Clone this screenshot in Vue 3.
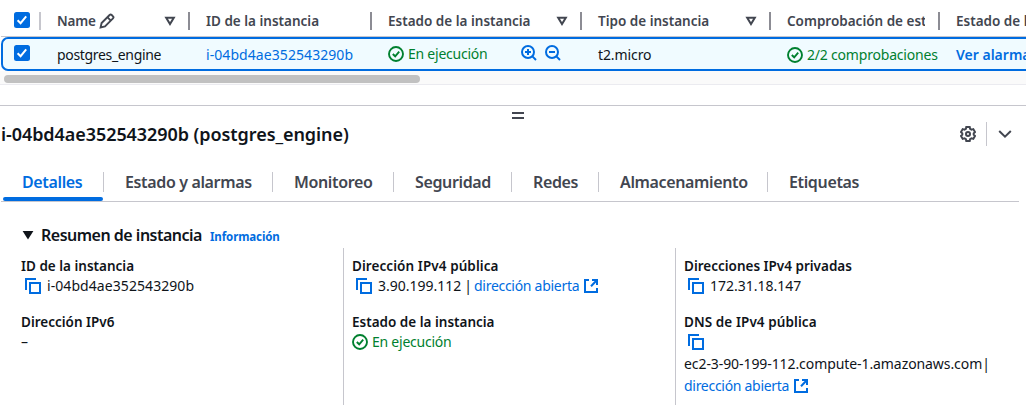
<script setup>
import { h } from 'vue'

const stroke = (cls, paths) => () =>
  h('svg', { class: ['ico', cls], viewBox: '0 0 16 16', width: 16, height: 16 }, paths.map(d => h('path', { d })))

const StatusOk = stroke('green', ['M8 1a7 7 0 1 1 0 14a7 7 0 0 1 0-14z', 'M4.8 8l2.4 2.3l4-4.6'])
const CopyIcon = stroke('blue', ['M1 12V1h10', 'M5 5h10v10H5z'])
const External = stroke('blue', ['M6 2H2v12h12v-4', 'M9 2H14v5', 'M14 2L8 8.2'])
const ZoomIn = stroke('blue', ['M7 1a6 6 0 1 1 0 12a6 6 0 0 1 0-12z', 'M11.4 11.4L15 15', 'M4 7h6', 'M7 4v6'])
const ZoomOut = stroke('blue', ['M7 1a6 6 0 1 1 0 12a6 6 0 0 1 0-12z', 'M11.4 11.4L15 15', 'M4 7h6'])
const Filter = stroke('grey', ['M4.2 4.8h7.6L8 11z'])
const Checkbox = () =>
  h('svg', { class: 'check', viewBox: '0 0 16 16', width: 16, height: 16 }, [
    h('rect', { width: 16, height: 16, rx: 2.5 }),
    h('path', { d: 'M3.6 8.2l3 3l5.6-6.8' }),
  ])

const tabs = ['Detalles', 'Estado y alarmas', 'Monitoreo', 'Seguridad', 'Redes', 'Almacenamiento', 'Etiquetas']
</script>

<template>
  <div class="console">
    <div class="grid head">
      <div class="cell pick"><Checkbox /></div>
      <div class="cell name"><span class="label">Name</span>
        <svg class="ico grey pencil" viewBox="0 0 16 16" width="16" height="16"><path d="M1.6 14.4l1-4.4L10.6 2a1.5 1.5 0 0 1 2.1 0l1.3 1.3a1.5 1.5 0 0 1 0 2.1L6 13.4z" /><path d="M8.4 4.2l3.4 3.4" /></svg>
        <Filter class="end" />
      </div>
      <div class="cell"><span>ID de la instancia</span></div>
      <div class="cell"><span>Estado de la instancia</span><Filter class="end" /></div>
      <div class="cell"><span>Tipo de instancia</span><Filter class="end" /></div>
      <div class="cell"><span class="clip">Comprobación de estado</span></div>
      <div class="cell"><span>Estado de la alarma</span></div>
    </div>
    <div class="grid row">
      <div class="cell pick"><Checkbox /></div>
      <div class="cell"><span class="engine">postgres_engine</span></div>
      <div class="cell"><a class="rid">i-04bd4ae352543290b</a></div>
      <div class="cell state"><StatusOk /><span class="ok">En ejecución</span><ZoomIn class="zin" /><ZoomOut class="zout" /></div>
      <div class="cell"><span class="type">t2.micro</span></div>
      <div class="cell state2"><StatusOk /><span class="ok checks">2/2 comprobaciones</span></div>
      <div class="cell"><a class="alarm">Ver alarmas</a></div>
    </div>
    <div class="track"><div class="thumb"></div></div>

    <section class="panel">
      <div class="handle"></div>
      <header class="title">
        <h1>i-04bd4ae352543290b (postgres_engine)</h1>
        <svg class="ico grey gear" viewBox="0 0 16 16" width="16" height="16"><path d="M6.3 1h3.4l.4 1.8l1.4.8l1.8-.5L15 6l-1.3 1.3v1.4L15 10l-1.7 2.9l-1.8-.5l-1.4.8l-.4 1.8H6.3l-.4-1.8l-1.4-.8l-1.8.5L1 10l1.3-1.3V7.3L1 6l1.7-2.9l1.8.5l1.4-.8z" /><circle cx="8" cy="8" r="2" /></svg>
        <i class="bar"></i>
        <svg class="ico grey" viewBox="0 0 16 16" width="16" height="16"><path d="M2.2 5L8 10.6L13.8 5" /></svg>
      </header>
      <nav class="tabs">
        <div v-for="(t, i) in tabs" :key="t" class="tab" :class="{ active: i === 0 }"><span>{{ t }}</span></div>
      </nav>
      <div class="summary">
        <svg class="caret" viewBox="0 0 12 10" width="12" height="10"><path d="M.6 1h10.8L6 9.4z" /></svg>
        <h2>Resumen de instancia</h2><a class="info">Información</a>
      </div>
      <div class="details">
        <div class="col">
          <h3>ID de la instancia</h3>
          <p><CopyIcon class="copy" /><span class="iid">i-04bd4ae352543290b</span></p>
          <h3 class="next">Dirección IPv6</h3>
          <p>–</p>
        </div>
        <div class="col">
          <h3 class="wide">Dirección IPv4 pública</h3>
          <p><CopyIcon class="copy" /><span class="ip">3.90.199.112</span><span class="sep">|</span><a class="open">dirección abierta</a><External class="ext" /></p>
          <h3 class="next">Estado de la instancia</h3>
          <p><StatusOk /><span class="ok">En ejecución</span></p>
        </div>
        <div class="col">
          <h3>Direcciones IPv4 privadas</h3>
          <p><CopyIcon class="copy" /><span class="ip">172.31.18.147</span></p>
          <h3 class="next wide">DNS de IPv4 pública</h3>
          <p><CopyIcon class="copy" /></p>
          <p class="wrap"><span class="dns">ec2-3-90-199-112.compute-1.amazonaws.com</span><span class="pipe">|</span></p>
          <p class="wrap"><a class="open">dirección abierta</a><External class="ext" /></p>
        </div>
      </div>
    </section>
  </div>
</template>

<style>
body { background: #fff; overflow: hidden; }
</style>

<style scoped>
.console { width: 1026px; height: 405px; overflow: hidden; font: 14px/20px "Noto Sans", "Open Sans", sans-serif; color: #0f141a; white-space: nowrap; }
.console :deep(.ico) { flex: none; fill: none; stroke-width: 2; }
.console :deep(.blue) { stroke: #006ce0; }
.console :deep(.green) { stroke: #00802f; stroke-width: 1.9; }
.console :deep(.grey) { stroke: #424650; }
.console :deep(.check rect) { fill: #006ce0; }
.console :deep(.check path) { fill: none; stroke: #fff; stroke-width: 2; }
a { color: #006ce0; }
h1, h2, h3, p { margin: 0; }

.grid { display: grid; grid-template-columns: 40px 149px 182px 210px 189px 169px 120px; margin-left: 1px; overflow: hidden; box-sizing: border-box; }
.cell { display: flex; align-items: center; padding-left: 16px; min-width: 0; box-sizing: border-box; }
.pick { padding-left: 13px; }
.head { height: 37px; padding-top: 4px; border-bottom: 1px solid #c6c6cd; color: #424650; font-weight: 600; font-size: 13.5px; }
.head .cell { position: relative; height: 34px; }
.head .cell::after { content: ""; position: absolute; right: 0; top: 8px; width: 2px; height: 18px; background: #8c8c94; }
.head .pick { padding-bottom: 2px; }
.head .pick::after { background: #c6c6cd; }
.head .end { margin-left: auto; margin-right: 12px; }
.label { letter-spacing: -0.2px; }
.head .pencil { margin-left: 3px; stroke-width: 1.9; }
.clip { width: 138px; overflow: hidden; }
.row { height: 34px; border: 2px solid #006ce0; border-right: 0; border-radius: 7px 0 0 7px; background: #f0fbff; grid-template-columns: 38px 149px 182px 210px 189px 169px 120px; }
.row .cell { padding-top: 2px; }
.row .pick { padding: 0 0 2px 11px; }
.row .state { padding-top: 0; }
.engine { letter-spacing: -0.33px; }
.rid, .iid { letter-spacing: 0.07px; }
.type { letter-spacing: -0.1px; }
.ok { color: #00802f; margin-left: 4px; letter-spacing: -0.24px; }
.checks { letter-spacing: -0.2px; }
.state .zin { margin-left: 34px; position: relative; top: -1px; }
.state .zout { margin-left: 8px; position: relative; top: -1px; }
.alarm { font-weight: 600; }
.track { height: 14px; box-sizing: border-box; padding: 4px 0 0 4px; background: #fafafa; border-bottom: 1px solid #ebebf0; }
.thumb { width: 416px; height: 8px; border-radius: 4px; background: #c1c1c1; }

.panel { margin-top: 20px; border-top: 1px solid #c6c6cd; }
.handle { width: 12px; height: 3px; margin: 6px 0 0 512px; border: solid #424650; border-width: 2px 0; }
.title { display: flex; align-items: center; height: 24px; margin-top: 3px; padding: 0 13px 0 1px; }
.title h1 { font-size: 18px; line-height: 24px; font-weight: 600; letter-spacing: -0.07px; margin-right: auto; }
.bar { width: 1px; height: 24px; background: #c6c6cd; margin: 0 10px; }
.tabs { display: grid; grid-template-columns: 101px 169px 121px 118px 87px 169px 1fr; height: 29px; margin: 26px 7px 0 1px; padding-left: 2px; border-bottom: 1px solid #c6c6cd; color: #424650; font-weight: 600; font-size: 16px; letter-spacing: -0.36px; }
.tab { position: relative; padding-left: 21px; height: 20px; border-right: 1px solid #c6c6cd; }
.tab:last-child { border: 0; }
.active { padding-left: 19px; color: #006ce0; }
.active::after { content: ""; position: absolute; left: 0; bottom: -9px; width: 100px; height: 4px; border-radius: 2px; background: #006ce0; }
.summary { display: flex; align-items: center; height: 24px; margin-top: 21px; padding-left: 22px; }
.caret { fill: #0f141a; margin-right: 7px; }
.summary h2 { font-size: 16px; line-height: 24px; font-weight: 600; letter-spacing: -0.5px; }
.info { font-size: 11.5px; font-weight: 700; letter-spacing: -0.1px; margin: 4px 0 0 8px; }
.details { display: grid; grid-template-columns: 343px 332px 351px; margin-top: 1px; height: 170px; }
.col { padding: 8px 0 0 8px; border-left: 1px solid #c6c6cd; }
.col:first-child { border: 0; padding-left: 21px; }
h3 { font-size: 13.5px; line-height: 20px; font-weight: 600; }
.wide { letter-spacing: 0.08px; }
.next { margin-top: 16px; }
p { display: flex; align-items: center; height: 20px; }
.wrap { height: 22px; position: relative; top: 1px; }
.copy { margin: 0 6px 0 4px; }
.sep { margin: 0 2px 0 3px; }
.open { letter-spacing: -0.29px; }
.ext { margin-left: 4px; }
.dns { letter-spacing: -0.08px; }
</style>
